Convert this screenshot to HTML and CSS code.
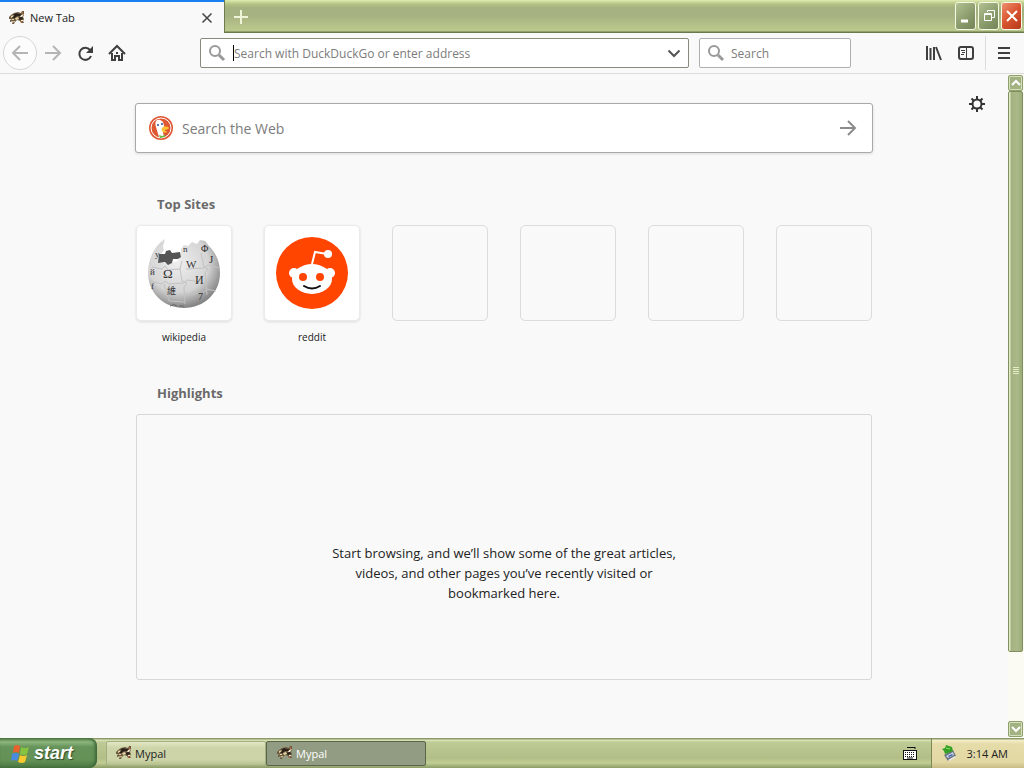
FILE: index.html
```html
<!DOCTYPE html>
<html lang="en">
<head>
  <meta charset="UTF-8">
  <meta name="viewport" content="width=device-width, initial-scale=1.0">
  <title>New Tab</title>
  <link rel="stylesheet" href="styles.css">
</head>
<body>
  <svg width="0" height="0" class="defs">
    <symbol id="mypal" viewBox="0 0 16 16">
      <path d="M0 7 2 5 5 3 9 2 12 3 13 1 15 1 15 5 14 7 15 9 14 11 15 13 12 13 11 11 8 10 6 12 5 14 3 14 4 11 1 12 1 10 3 9 0 9z" fill="#6d5b40"/>
      <path d="M4 5 7 3 10 4 13 4 12 6 8 6 6 8 3 8zM9 8l4-1 1 2-3 1z" fill="#2a211a"/>
      <path d="M2 6 5 5 4 7 2 8zM6 8 9 7 10 9 7 10zM4 11h2l-1 2zM3 9h2v1H3z" fill="#e4d3a4"/>
      <path d="M12 5 15 4 13 7 11 7zM12 10h2v1h-2z" fill="#f3e8cc"/>
      <path d="M13 2h1v2h-1zM12 11h1v2h-1z" fill="#b5643f"/>
    </symbol>
    <symbol id="glass" viewBox="0 0 18 18">
      <circle cx="7" cy="7" r="5" fill="none" stroke="#999" stroke-width="2"/>
      <path d="M11 11l5 5" stroke="#999" stroke-width="3"/>
    </symbol>
  </svg>

  <header class="tabs">
    <div class="tab">
      <svg class="icon16"><use href="#mypal"/></svg>
      <span>New Tab</span>
      <button aria-label="Close tab"><svg width="12" height="12"><path d="M1.500 1.500l9 9M10.500 1.500l-9 9" stroke="#444" stroke-width="1.500"/></svg></button>
    </div>
    <button class="newtab" aria-label="Open a new tab"><svg width="16" height="16"><path d="M8 1v14M1 8h14" stroke="#eef4d8" stroke-width="2"/></svg></button>
    <div class="wincontrols">
      <button aria-label="Minimize"><svg width="18" height="24"><path d="M4 17h7" stroke="#fff" stroke-width="3"/></svg></button>
      <button aria-label="Restore"><svg width="18" height="24"><path d="M4.500 9.500h7v7h-7zM4 10.500h8M7.500 8V6.500h7v7H12" fill="none" stroke="#fff"/></svg></button>
      <button class="close" aria-label="Close"><svg width="18" height="24"><path d="M4 7l10 10M14 7L4 17" stroke="#fff" stroke-width="2"/></svg></button>
    </div>
  </header>

  <nav class="toolbar">
    <button class="back" aria-label="Back"><svg width="18" height="18"><path d="M17 9H2M9 2L2 9l7 7" fill="none" stroke="#b5b5b5" stroke-width="2"/></svg></button>
    <button class="tool" aria-label="Forward"><svg width="18" height="18"><path d="M1 9h15M9 2l7 7-7 7" fill="none" stroke="#b5b5b5" stroke-width="2"/></svg></button>
    <button class="tool" aria-label="Reload"><svg width="18" height="18"><path d="M15 12A6 6 0 1 1 14 6" fill="none" stroke="#3f3f3f" stroke-width="2"/><path d="M17 2v7h-7z" fill="#3f3f3f"/></svg></button>
    <button class="tool" aria-label="Home"><svg width="18" height="18"><path d="M1 10l8-8 8 8" fill="none" stroke="#3f3f3f" stroke-width="2"/><path d="M4 9v7h3v-4h4v4h3V9" fill="none" stroke="#3f3f3f" stroke-width="2"/><path d="M8 8h2v2H8z" fill="#3f3f3f"/></svg></button>
    <label class="urlbar">
      <svg width="18" height="18"><use href="#glass"/></svg>
      <span class="caret"></span>
      <input type="text" placeholder="Search with DuckDuckGo or enter address" aria-label="Address">
      <svg width="14" height="14"><path d="M1.500 4.500L7 10l5.500-5.500" fill="none" stroke="#555" stroke-width="2"/></svg>
    </label>
    <label class="searchbar">
      <svg width="18" height="18"><use href="#glass"/></svg>
      <input type="text" placeholder="Search" aria-label="Search">
    </label>
    <div class="tools">
      <button class="tool" aria-label="Library"><svg width="18" height="18"><path d="M2 2v14M5.500 4v12M9 3v13M11 3l5 13" fill="none" stroke="#3f3f3f" stroke-width="2"/></svg></button>
      <button class="tool" aria-label="Sidebars"><svg width="18" height="18"><rect x="2" y="3" width="14" height="12" rx="2" fill="none" stroke="#3f3f3f" stroke-width="2"/><path d="M9.500 3v12" stroke="#3f3f3f"/><path d="M4 6.500h4M5 8.500h3M4 10.500h3" stroke="#3f3f3f"/></svg></button>
      <button class="tool menu" aria-label="Menu"><svg width="18" height="18"><path d="M3 4h12M3 9h12M3 14h12" stroke="#3f3f3f" stroke-width="2"/></svg></button>
    </div>
  </nav>

  <div class="page">
    <main>
      <button class="gear" aria-label="Customize"><svg width="18" height="18"><circle cx="9" cy="9" r="4.500" fill="none" stroke="#333" stroke-width="2"/><path d="M9 1v3M9 14v3M1 9h3M14 9h3M3.500 3.500l2 2M12.500 12.500l2 2M14.500 3.500l-2 2M5.500 12.500l-2 2" stroke="#333" stroke-width="2"/></svg></button>
      <div class="content">
        <label class="websearch">
          <svg width="24" height="24">
            <circle cx="12" cy="12" r="12" fill="#de5833"/>
            <circle cx="12" cy="12" r="10" fill="none" stroke="#fff"/>
            <path d="M8 4c3-1 7 1 7 6l1 4-2 2 1 5c-2 1-4 1-5 0L7 11C6 8 6 6 8 4z" fill="#fff"/>
            <path d="M14 11c3-1 6 0 6 1s-3 2-6 2c2 1 4 1 4 2s-4 1-5-1 0-3 1-4z" fill="#fdc02f"/>
            <path d="M10 19l3 1 3-1v2l-5 1z" fill="#65bc46"/>
            <circle cx="9" cy="9" r="1" fill="#2d4f8e"/><circle cx="13" cy="8" r="1" fill="#2d4f8e"/>
          </svg>
          <input type="text" placeholder="Search the Web" aria-label="Search the Web">
          <svg width="18" height="18"><path d="M1 9h15M9 2l7 7-7 7" fill="none" stroke="#8c8c8c" stroke-width="2"/></svg>
        </label>

        <h2>Top Sites</h2>
        <div class="sites">
          <a href="#" class="site">
            <span class="tile">
              <svg width="76" height="76">
                <defs><radialGradient id="ball" cx="42%" cy="35%" r="65%"><stop offset="0" stop-color="#eee"/><stop offset=".65" stop-color="#d4d4d4"/><stop offset="1" stop-color="#858585"/></radialGradient></defs>
                <path d="M19 4C8 11 2 24 2 38c0 20 16 35 36 35s36-15 36-35c0-11-4-20-11-27l-4-5-5-1-3 4-5-2-4 4-4-1-3 4v6l-3 6-9 3-10-2 2-8 3-4-1-4z" fill="url(#ball)"/>
                <path d="M13 19h6l1-3 4-1 2 3 8-1 1 5-3 2h-5l-1 4-4 2-3-3-7 1z" fill="#555"/>
                <path d="M6 32l10 2 3-3 3 4 12-1 2-8M34 34l2 12 5 2-3 4 1 17M4 46l12 3 3-3 4 3 15-1 3-3 14 2M55 18l3 14 4 2-3 4 2 22M40 34l18-1 4-3 11 3M18 49l5 17M38 60l19-2 4-4 9 2M23 66l15 1" fill="none" stroke="#c2c2c2"/>
                <g fill="#333" font-family="Liberation Serif, serif">
                  <text x="17" y="43" font-size="13">Ω</text>
                  <text x="40" y="33" font-size="11">W</text>
                  <text x="49" y="49" font-size="12">И</text>
                  <text x="21" y="59" font-size="9" class="cjk">維</text>
                  <text x="52" y="65" font-size="10">7</text>
                  <text x="37" y="17" font-size="9">n</text>
                  <text x="55" y="17" font-size="10">Φ</text>
                  <text x="63" y="28" font-size="11">J</text>
                  <text x="4" y="40" font-size="9">й</text>
                  <text x="5" y="54" font-size="9">f</text>
                  <text x="9" y="22" font-size="9">y</text>
                </g>
                <path d="M24 71q4-3 7 0M33 71h5" fill="none" stroke="#666"/>
              </svg>
            </span>
            <span>wikipedia</span>
          </a>
          <a href="#" class="site">
            <span class="tile">
              <svg width="72" height="72">
                <circle cx="36" cy="36" r="36" fill="#ff4500"/>
                <path d="M36 27l3-12 12 2" fill="none" stroke="#fff" stroke-width="2"/>
                <circle cx="52" cy="17" r="4" fill="#fff"/>
                <circle cx="18" cy="36" r="5" fill="#fff"/><circle cx="54" cy="36" r="5" fill="#fff"/>
                <ellipse cx="36" cy="42" rx="20" ry="15" fill="#fff"/>
                <circle cx="27" cy="40" r="4" fill="#ff4500"/><circle cx="44" cy="40" r="4" fill="#ff4500"/>
                <path d="M28 49q8 5 16 0" fill="none" stroke="#111" stroke-width="2" stroke-linecap="round"/>
              </svg>
            </span>
            <span>reddit</span>
          </a>
          <div class="site"><span class="tile empty"></span></div>
          <div class="site"><span class="tile empty"></span></div>
          <div class="site"><span class="tile empty"></span></div>
          <div class="site"><span class="tile empty"></span></div>
        </div>

        <h2>Highlights</h2>
        <section class="highlights">
          <p>Start browsing, and we’ll show some of the great articles, videos, and other pages you’ve recently visited or bookmarked here.</p>
        </section>
      </div>
    </main>
    <div class="scrollbar">
      <button aria-label="Scroll up"><svg width="12" height="12"><path d="M2 8l4-4 4 4" fill="none" stroke="#fff" stroke-width="2"/></svg></button>
      <div class="track"><div class="thumb"><svg width="8" height="8"><path d="M1 .500h6M1 2.500h6M1 4.500h6M1 6.500h6" stroke="#e3ecc4"/></svg></div></div>
      <button aria-label="Scroll down"><svg width="12" height="12"><path d="M2 4l4 4 4-4" fill="none" stroke="#fff" stroke-width="2"/></svg></button>
    </div>
  </div>

  <footer class="taskbar">
    <button class="start">
      <svg width="20" height="20">
        <path d="M4 3q3-2 6 0l-1 7q-3-2-6 0z" fill="#e8622c"/>
        <path d="M11 4q4 2 8 0l-2 7q-3 2-7 0z" fill="#86c440"/>
        <path d="M2 11q3-2 7 0l-2 7q-3-2-6 0z" fill="#4a8be0"/>
        <path d="M10 12q3 2 7 0l-2 7q-3 2-7 0z" fill="#f8c92c"/>
      </svg>
      <span>start</span>
    </button>
    <div class="tasks">
      <button class="task"><svg class="icon16"><use href="#mypal"/></svg>Mypal</button>
      <button class="task active"><svg class="icon16"><use href="#mypal"/></svg>Mypal</button>
    </div>
    <svg class="keyboard" width="14" height="14"><path d="M4 1l1 1 1-1 1 1 1-1 1 1 1-1 1 1 1-1v2" fill="none" stroke="#111"/><rect x=".500" y="4.500" width="13" height="9" fill="#fff" stroke="#111"/><path d="M2 6.500h10M2 8.500h10M2 10.500h10" stroke="#111" stroke-dasharray="1 1"/><path d="M4 12h6" stroke="#111"/></svg>
    <div class="tray">
      <svg width="16" height="18"><path d="M3 11l9-5 3 6-8 5z" fill="#68717c"/><path d="M5 12l7-4 1 3-6 3z" fill="#c9d7ec"/><path d="M7 12l4-2 1 1-4 2z" fill="#4560a8"/><path d="M7 16l7-4 1 1-7 4z" fill="#eee"/><path d="M1 5l3-1 1-3 6 2 1 4-5 2-3 1-1-3z" fill="#34a126"/><path d="M5 4l4 1" stroke="#8be070"/></svg>
      <span>3:14 AM</span>
    </div>
  </footer>
</body>
</html>
```
FILE: styles.css
```css
*{
  box-sizing: border-box;
}
body{
  margin: 0;
  height: 100vh;
  display: flex;
  flex-direction: column;
  background-color: #f9f9f9;
  font-family: "Open Sans", "Noto Sans", "Noto Sans CJK SC", sans-serif;
  font-size: 11px;
  color: #222;
}
button{
  display: flex;
  align-items: center;
  justify-content: center;
  padding: 0;
  border: none;
  background: none;
  font: inherit;
  color: inherit;
}
svg{
  flex: none;
}
input{
  flex: 1;
  min-width: 0;
  padding: 0;
  border: none;
  outline: none;
  background: none;
  font: inherit;
}
input::placeholder{
  color: #7c7c7c;
  opacity: 1;
}
.defs{
  position: absolute;
}
.icon16{
  width: 16px;
  height: 16px;
}
.cjk{
  font-family: "Noto Sans CJK TC", sans-serif;
}
/* tab strip */
.tabs{
  flex: none;
  height: 33px;
  display: flex;
  background: linear-gradient(#e0ecb0, #b4c384 4px, #a4b180 8px, #a6b381 16px, #b7c48b 27px, #bac78d 31px, #687a4b 32px);
}
.tab{
  width: 224px;
  display: flex;
  align-items: center;
  gap: 5px;
  padding: 0 11px 0 9px;
  border-top: 2px solid #1a7ff0;
  background-color: #f9f9f9;
}
.tab button{
  margin-left: auto;
}
.newtab{
  width: 33px;
  border-left: 1px solid #6d7d4f;
}
.wincontrols{
  margin-left: auto;
  display: flex;
  align-items: flex-start;
  gap: 2px;
  padding: 2px 2px 0 0;
}
.wincontrols button{
  width: 21px;
  height: 28px;
  border: 1px solid #f5f8e4;
  border-radius: 3px;
  background: linear-gradient(135deg, #b3c191, #88996a 60%, #74845a);
}
.wincontrols button.close{
  background: linear-gradient(135deg, #ec9070, #d9542f 50%, #b53a1b);
}
/* navigation */
.toolbar{
  flex: none;
  height: 41px;
  display: flex;
  align-items: center;
  padding: 0 2px 0 3px;
  border-bottom: 1px solid #dcdcdc;
}
.back{
  width: 34px;
  height: 34px;
  border: 1px solid #d6d6d6;
  border-radius: 50%;
  background-color: #fcfcfc;
}
.tool{
  width: 32px;
  height: 34px;
}
.urlbar, .searchbar{
  height: 30px;
  display: flex;
  align-items: center;
  padding: 0 7px;
  border: 1px solid #b0b0b0;
  border-radius: 2px;
  background-color: #fff;
}
.urlbar{
  flex: 1;
  margin-left: 67px;
  border-color: #888b7c;
  font-size: 12px;
}
.caret{
  width: 1px;
  height: 16px;
  margin-left: 7px;
  background-color: #000;
}
.searchbar{
  width: 152px;
  gap: 6px;
  margin-left: 10px;
  font-size: 12px;
}
.tools{
  display: flex;
  margin-left: 67px;
}
.tools .menu{
  width: 37px;
  margin-left: 3px;
  border-left: 1px solid #dcdcdc;
}
/* new tab page */
.page{
  flex: 1;
  min-height: 0;
  display: flex;
}
main{
  flex: 1;
  position: relative;
  padding-top: 29px;
}
.gear{
  position: absolute;
  top: 21px;
  right: 22px;
}
.content{
  max-width: 738px;
  margin: 0 auto;
}
.websearch{
  height: 50px;
  display: flex;
  align-items: center;
  gap: 9px;
  padding: 0 15px 0 13px;
  border: 1px solid #a9a9a9;
  border-radius: 3px;
  background-color: #fff;
  box-shadow: 0 1px 3px rgba(0,0,0,0.12);
  font-size: 14px;
}
h2{
  margin: 0 22px;
  font-size: 13px;
  line-height: 20px;
  color: #6a6a6a;
}
.websearch + h2{
  margin-top: 41px;
}
.sites{
  display: flex;
  justify-content: space-between;
  padding: 11px 1px 38px;
}
.site{
  width: 96px;
  display: flex;
  flex-direction: column;
  align-items: center;
  gap: 8px;
  font-size: 10px;
  line-height: 16px;
  color: #222;
  text-decoration: none;
}
.tile{
  width: 96px;
  height: 96px;
  display: flex;
  align-items: center;
  justify-content: center;
  border: 1px solid #ebebeb;
  border-radius: 5px;
  background-color: #fff;
  box-shadow: 0 1px 3px rgba(0,0,0,0.12);
}
.tile.empty{
  border-color: #dcdcdc;
  background: none;
  box-shadow: none;
}
.highlights{
  height: 266px;
  margin: 11px 1px 0;
  display: flex;
  justify-content: center;
  padding-top: 128px;
  border: 1px solid #d8d8d8;
  border-radius: 3px;
}
.highlights p{
  max-width: 350px;
  margin: 0;
  font-size: 13px;
  line-height: 20px;
  text-align: center;
}
/* scrollbar */
.scrollbar{
  width: 16px;
  display: flex;
  flex-direction: column;
  padding: 1px 1px 1px 0;
  background-color: #fbfbf3;
}
.scrollbar button{
  height: 16px;
  border: 1px solid #8fa06c;
  border-radius: 2px;
  background-color: #a3b281;
  box-shadow: inset 0 0 0 1px #d5dfbd;
}
.track{
  flex: 1;
}
.thumb{
  height: 89%;
  display: flex;
  align-items: center;
  justify-content: center;
  border: 1px solid #7e8f60;
  border-radius: 2px;
  background: linear-gradient(90deg, #e2eac8 1px, #a3b07f 2px, #abb98a 8px, #9dad78);
}
/* taskbar */
.taskbar{
  flex: none;
  height: 30px;
  display: flex;
  background: linear-gradient(#8b9a68 1px, #e0e8bd 2px, #bfcb96 4px, #b1be86 20px, #c0cd93 25px, #8c9c66);
}
.start{
  width: 97px;
  justify-content: flex-start;
  gap: 4px;
  padding-left: 10px;
  border-radius: 0 8px 8px 0;
  background: linear-gradient(#517a43, #8db67e 4px, #66935a 9px, #639156 22px, #477540);
  box-shadow: inset -2px 0 3px #3a6637;
  color: #fff;
  font-family: "Liberation Sans", sans-serif;
  font-size: 18px;
  font-weight: bold;
  font-style: italic;
  text-shadow: 1px 1px 1px #2d4c28;
}
.tasks{
  flex: 1;
  display: flex;
  align-items: center;
  padding-left: 9px;
}
.task{
  width: 160px;
  height: 25px;
  justify-content: flex-start;
  gap: 3px;
  padding-left: 9px;
  border: 1px solid #a3ae83;
  border-radius: 2px;
  background: linear-gradient(#e3e8c6, #ccd4a8 6px, #ccd4a8 18px, #b4c08b);
}
.task.active{
  padding-left: 10px;
  border-color: #59664a;
  background: #919c82;
  color: #fff;
}
.keyboard{
  margin: 8px 14px 0 0;
}
.tray{
  display: flex;
  align-items: center;
  gap: 10px;
  padding: 0 16px 0 9px;
  border-left: 1px solid #7d8a56;
  background: linear-gradient(#8b9a68 1px, #f5efcd 2px, #e6dca9 6px, #e2d8a4 24px, #c9bd84);
}
```
